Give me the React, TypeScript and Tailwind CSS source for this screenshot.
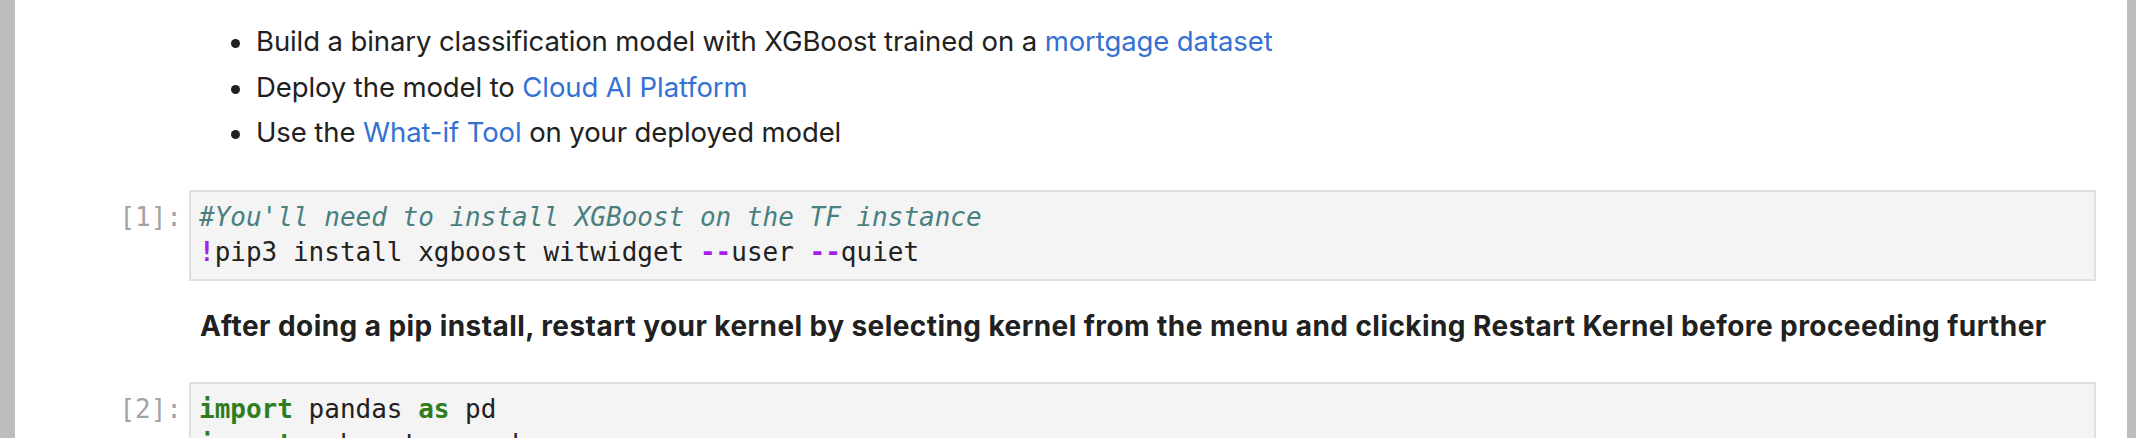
import type { ReactNode } from "react";

const SANS = "font-['Inter','Noto_Sans',sans-serif]";
const MONO = "font-['DejaVu_Sans_Mono','Liberation_Mono',monospace]";

function Link({ children }: { children: ReactNode }) {
  return <a className="text-[#3471d3]">{children}</a>;
}

function Bullet({ children }: { children: ReactNode }) {
  return (
    <li className="relative">
      <span className="absolute left-[-25px] top-[20px] h-[9px] w-[9px] rounded-full bg-[#212121]" />
      {children}
    </li>
  );
}

function CodeCell({ n, children }: { n: number; children: ReactNode }) {
  return (
    <div className={`flex ${MONO} text-[26px] leading-[35px]`}>
      <div className="w-[174px] shrink-0 pr-[7px] pt-[10px] text-right text-[#a3a3a3]">
        [{n}]:
      </div>
      <div className="mr-[31px] flex-1 border-2 border-[#e0e0e0] bg-[#f4f4f4] pb-[9px] pl-[8px] pt-[8px] text-[#212121] whitespace-pre">
        {children}
      </div>
    </div>
  );
}

const kw = "font-bold text-[#2f7d1f]";
const op = "font-bold text-[#a21ff0]";

export default function App() {
  return (
    <div className="flex h-[438px] w-[2142px] overflow-hidden bg-white">
      <div className="w-[15px] shrink-0 bg-[#bdbdbd]" />

      <div className="flex-1 text-[#212121]">
        <ul
          className={`${SANS} ml-[185px] mt-[19px] pl-[56px] text-[27.5px] leading-[45.5px] tracking-[-0.1px]`}
        >
          <Bullet>
            Build a binary classification model with XGBoost trained on a{" "}
            <Link>mortgage dataset</Link>
          </Bullet>
          <Bullet>
            Deploy the model to <Link>Cloud AI Platform</Link>
          </Bullet>
          <Bullet>
            Use the <Link>What-if Tool</Link> on your deployed model
          </Bullet>
        </ul>

        <div className="mt-[34px]">
          <CodeCell n={1}>
            <div className="italic text-[#4a7f7f]">
              #You'll need to install XGBoost on the TF instance
            </div>
            <div>
              <span className={op}>!</span>pip3 install xgboost witwidget{" "}
              <span className={op}>--</span>user <span className={op}>--</span>quiet
            </div>
          </CodeCell>
        </div>

        <p
          className={`${SANS} ml-[185px] mt-[23px] text-[28px] font-bold leading-[45.5px] tracking-[0.43px]`}
        >
          After doing a pip install, restart your kernel by selecting kernel from the menu and
          clicking Restart Kernel before proceeding further
        </p>

        <div className="mt-[33px]">
          <CodeCell n={2}>
            <div>
              <span className={kw}>import</span> pandas <span className={kw}>as</span> pd
            </div>
            <div>
              <span className={kw}>import</span> xgboost <span className={kw}>as</span> xgb
            </div>
            <div>
              <span className={kw}>import</span> numpy <span className={kw}>as</span> np
            </div>
          </CodeCell>
        </div>
      </div>

      <div className="w-[9px] shrink-0 bg-[#bdbdbd]" />
      <div className="w-[6px] shrink-0 bg-white" />
    </div>
  );
}
